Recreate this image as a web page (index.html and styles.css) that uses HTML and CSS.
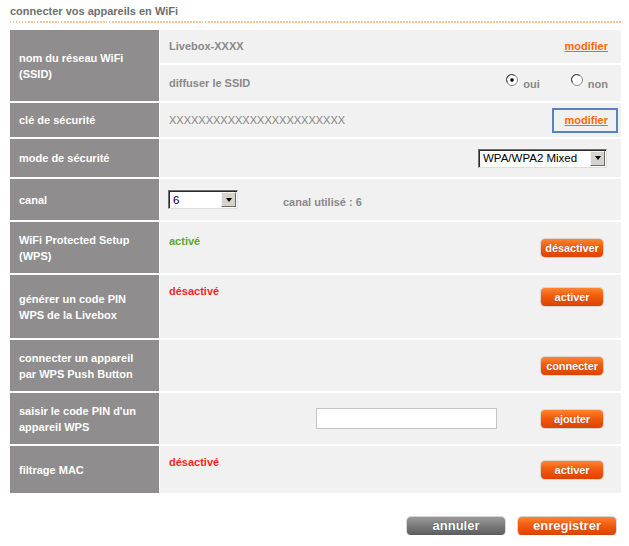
FILE: index.html
```html
<!DOCTYPE html>
<html lang="fr">
<head>
<meta charset="utf-8">
<title>connecter vos appareils en WiFi</title>
<link rel="stylesheet" href="styles.css">
</head>
<body>
<div class="page">
  <h1 class="title">connecter vos appareils en WiFi</h1>
  <div class="dots"></div>

  <div class="form">
    <div class="label ssid">nom du réseau WiFi<br>(SSID)</div>
    <div class="value">
      <span class="val">Livebox-XXXX</span>
      <a class="link" href="#">modifier</a>
    </div>
    <div class="value">
      <span class="val">diffuser le SSID</span>
      <div class="radios">
        <span class="radio">
          <svg width="12" height="12" viewBox="0 0 12 12"><circle cx="6" cy="6" r="5.5" fill="#fff" stroke="#8a8a8a"/><path d="M1.5 8.5A5 5 0 0 1 8.5 1.5" fill="none" stroke="#444" stroke-width="1"/><circle cx="6" cy="6" r="1.8" fill="#000"/></svg>
          <span class="rlabel">oui</span>
        </span>
        <span class="radio">
          <svg width="12" height="12" viewBox="0 0 12 12"><circle cx="6" cy="6" r="5.5" fill="#fff" stroke="#8a8a8a"/><path d="M1.5 8.5A5 5 0 0 1 8.5 1.5" fill="none" stroke="#444" stroke-width="1"/></svg>
          <span class="rlabel">non</span>
        </span>
      </div>
    </div>

    <div class="label">clé de sécurité</div>
    <div class="value">
      <span class="val key">XXXXXXXXXXXXXXXXXXXXXXXX</span>
      <a class="link focus" href="#">modifier</a>
    </div>

    <div class="label">mode de sécurité</div>
    <div class="value">
      <div class="select wide">
        <span class="select-text">WPA/WPA2 Mixed</span>
        <span class="select-btn"><span class="tri"></span></span>
      </div>
    </div>

    <div class="label">canal</div>
    <div class="value">
      <div class="select narrow">
        <span class="select-text">6</span>
        <span class="select-btn"><span class="tri"></span></span>
      </div>
      <span class="val used">canal utilisé : 6</span>
    </div>

    <div class="label">WiFi Protected Setup<br>(WPS)</div>
    <div class="value">
      <span class="status on s-wps">activé</span>
      <button class="btn" type="button">désactiver</button>
    </div>

    <div class="label">générer un code PIN<br>WPS de la Livebox</div>
    <div class="value">
      <span class="status off s-top">désactivé</span>
      <button class="btn btn-top" type="button">activer</button>
    </div>

    <div class="label">connecter un appareil<br>par WPS Push Button</div>
    <div class="value">
      <button class="btn" type="button">connecter</button>
    </div>

    <div class="label">saisir le code PIN d'un<br>appareil WPS</div>
    <div class="value">
      <input class="pin" type="text" aria-label="code PIN">
      <button class="btn after-input" type="button">ajouter</button>
    </div>

    <div class="label">filtrage MAC</div>
    <div class="value">
      <span class="status off s-top">désactivé</span>
      <button class="btn" type="button">activer</button>
    </div>
  </div>

  <div class="actions">
    <button class="btn big grey" type="button">annuler</button>
    <button class="btn big" type="button">enregistrer</button>
  </div>
</div>
</body>
</html>
```
FILE: styles.css
```css
* { box-sizing: border-box; }

body {
  margin: 0;
  background: #fff;
  font-family: "Liberation Sans", Arial, sans-serif;
  font-size: 11px;
  font-weight: bold;
}

.page {
  width: 611px;
  margin-left: 10px;
}

.title {
  margin: 0;
  padding-top: 5px;
  font-size: 11px;
  line-height: 13px;
  font-weight: bold;
  color: #6e6e6e;
}

.dots {
  margin-top: 3px;
  height: 2px;
  background: repeating-linear-gradient(to right, #f9c39a 0 1.5px, transparent 1.5px 3px);
}

.form {
  margin-top: 7px;
  display: grid;
  grid-template-columns: 149px 1fr;
  grid-template-rows: 33px 36px 34px 38px 41px 51px 63px 51px 51px 47px;
  column-gap: 1px;
  row-gap: 2px;
}

.label {
  background: #8f8d8d;
  color: #fff;
  padding-left: 9px;
  line-height: 16px;
  display: flex;
  align-items: center;
}

.label.ssid { grid-row: span 2; }

.value {
  background: #f2f1f1;
  display: flex;
  align-items: center;
  padding: 0 3px 0 9px;
  color: #8a8888;
  line-height: 13px;
}

.val.key { font-weight: normal; color: #858585; }

.val.used { margin-left: 45px; margin-top: 5px; }

.link {
  margin-left: auto;
  display: inline-block;
  border: 2px solid transparent;
  padding: 4px 8px 4px 11px;
  color: #ff6a00;
  text-decoration: underline;
  line-height: 13px;
}

.link.focus { border-color: #5583c4; }

.radios {
  margin-left: auto;
  margin-right: 10px;
  display: flex;
  gap: 31px;
}

.radio {
  display: flex;
  align-items: flex-start;
  gap: 5px;
}

.radio svg { margin-top: -1px; }

.rlabel { margin-top: 3px; color: #8a8888; }

.select {
  display: flex;
  align-items: center;
  height: 19px;
  background: #fff;
  border-style: solid;
  border-width: 1px;
  border-color: #6f6f6f #dedede #dedede #6f6f6f;
  box-shadow: inset 1px 1px 0 #2a2a2a;
  font-weight: normal;
  color: #000;
  font-size: 11.5px;
  padding: 1px 1px 1px 3px;
}

.select.wide { width: 129px; margin-left: auto; margin-right: 11px; }
.select.narrow { width: 70px; margin-left: -1px; }

.select-text { flex: 1; padding-left: 1px; padding-top: 1px; }

.select-btn {
  width: 15px;
  height: 15px;
  background: #d6d3cc;
  border-style: solid;
  border-width: 1px;
  border-color: #f4f4f4 #6a6a6a #6a6a6a #f4f4f4;
  display: flex;
  align-items: center;
  justify-content: center;
}

.tri {
  width: 0;
  height: 0;
  border-left: 3.5px solid transparent;
  border-right: 3.5px solid transparent;
  border-top: 4px solid #000;
}

.status { align-self: flex-start; }
.status.s-wps { margin-top: 13px; }
.status.s-top { margin-top: 10px; }
.status.on { color: #5fa52b; }
.status.off { color: #ff1e1e; }

.btn {
  margin-left: auto;
  margin-right: 15px;
  width: 62px;
  height: 18px;
  padding: 0;
  border: 0;
  border-radius: 4px;
  background: linear-gradient(#ff8430 0%, #f25c0c 45%, #dc4200 100%);
  box-shadow: 0 0 0 1px #d9d6d6;
  color: #fff;
  font-family: "Liberation Sans", Arial, sans-serif;
  font-weight: bold;
  font-size: 11px;
  line-height: 18px;
  letter-spacing: -0.1px;
  white-space: nowrap;
  text-shadow: 0 0 1px rgba(120, 40, 0, 0.6);
  cursor: pointer;
}

.btn.btn-top { align-self: flex-start; margin-top: 13px; }

.pin {
  margin-left: auto;
  width: 181px;
  height: 21px;
  border: 1px solid #c4c4c4;
  background: #fff;
  padding: 0 3px;
}

.btn.after-input { margin-left: 44px; }

.actions {
  display: flex;
  justify-content: flex-end;
  gap: 13px;
  margin-top: 24px;
  padding-right: 5px;
}

.btn.big {
  margin: 0;
  width: 98px;
  height: 18px;
  font-size: 13px;
  letter-spacing: 0;
}

.btn.grey {
  background: linear-gradient(#9a9a9a 0%, #7a7a7a 50%, #5c5c5c 100%);
  text-shadow: 0 0 1px rgba(0, 0, 0, 0.6);
}
```
